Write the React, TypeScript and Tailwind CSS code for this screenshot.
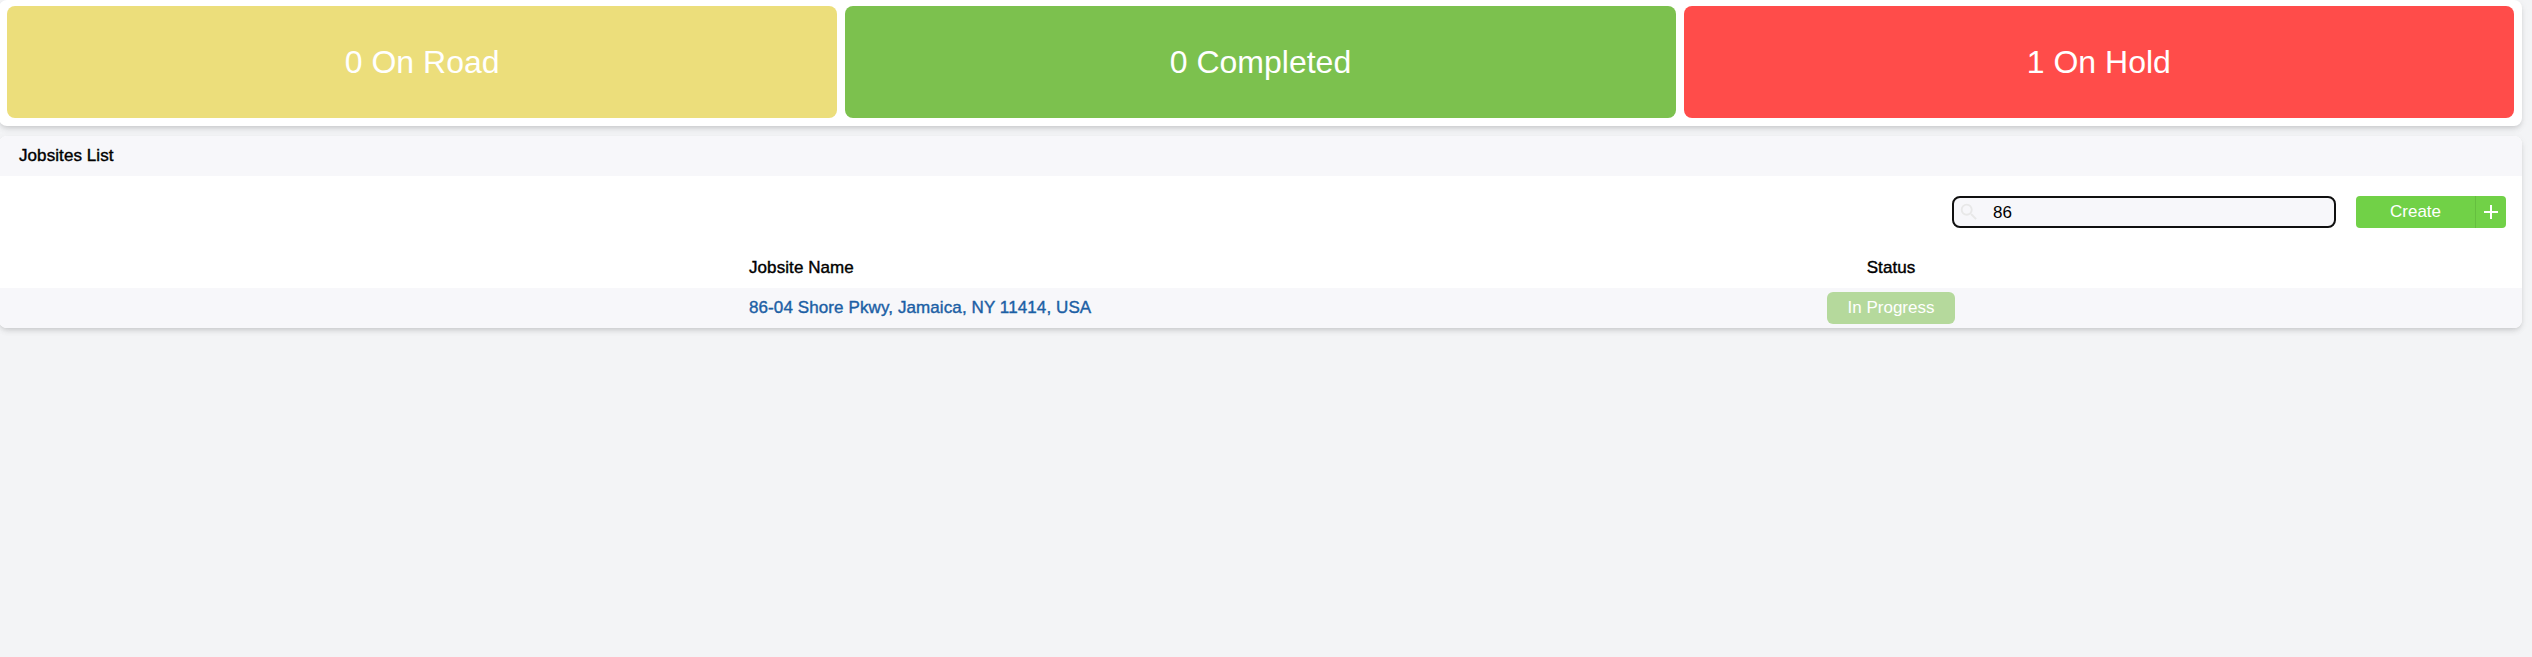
const cards = [
  { label: "0 On Road", color: "bg-[#ecde7b]" },
  { label: "0 Completed", color: "bg-[#7cc14e]" },
  { label: "1 On Hold", color: "bg-[#ff4c4a]" },
];

export default function App() {
  return (
    <div className="h-[657px] w-full overflow-hidden bg-[#f3f4f6] pr-[10px] font-['Liberation_Sans',Arial,sans-serif] text-[17px] text-black">
      <section className="-ml-px grid h-[126px] grid-cols-3 gap-2 rounded-lg bg-white px-2 pt-1.5 pb-2 shadow-[0_4px_6px_-1px_rgba(0,0,0,0.08),0_2px_4px_-1px_rgba(0,0,0,0.08),0_2px_8px_rgba(0,0,0,0.05)]">
        {cards.map((c) => (
          <div key={c.label} className={`flex items-center justify-center rounded-lg text-[32px] text-white ${c.color}`}>
            {c.label}
          </div>
        ))}
      </section>

      <section className="-ml-px mt-2.5 overflow-hidden rounded-lg bg-white shadow-[0_4px_6px_-1px_rgba(0,0,0,0.08),0_2px_4px_-1px_rgba(0,0,0,0.08),0_2px_8px_rgba(0,0,0,0.05)]">
        <header className="flex h-10 items-center bg-[#f7f7fa] pl-5 tracking-[0.08px] [-webkit-text-stroke:0.4px_black]">Jobsites List</header>
        <div className="flex h-[72px] items-start justify-end gap-5 pt-5 pr-4">
          <div className="flex h-8 w-96 items-center rounded-lg border-2 border-[#101010] bg-[#f7f7fa] pl-1">
            <svg viewBox="0 0 24 24" className="size-[22px] text-[#e8e8e8]" fill="currentColor">
              <path d="M15.5 14h-.79l-.28-.27A6.47 6.47 0 0 0 16 9.5 6.5 6.5 0 1 0 9.5 16c1.61 0 3.09-.59 4.23-1.57l.27.28v.79l5 4.99L20.49 19l-4.99-5zm-6 0C7.01 14 5 11.99 5 9.5S7.01 5 9.5 5 14 7.01 14 9.5 11.99 14 9.5 14z" />
            </svg>
            <input aria-label="Search jobsites" defaultValue="86" className="ml-[13px] w-64 bg-transparent pt-px outline-none" />
          </div>
          <button className="flex h-8 w-[150px] overflow-hidden rounded bg-[#71d147] text-white">
            <span className="flex h-full flex-1 items-center justify-center pb-px">Create</span>
            <span className="flex h-full w-[31px] items-center justify-center border-l border-[#65bf3f]">
              <svg viewBox="0 0 14 14" className="size-3.5" stroke="currentColor" strokeWidth="2">
                <path d="M7 0v14M0 7h14" />
              </svg>
            </span>
          </button>
        </div>
        <div className="flex h-10 items-center pl-[750px] tracking-[0.08px] [-webkit-text-stroke:0.4px_black]">
          <div className="w-[1078px]">Jobsite Name</div>
          <div className="w-32 text-center">Status</div>
        </div>
        <div className="flex h-10 items-center bg-[#f7f7fa] pl-[750px]">
          <a className="w-[1078px] tracking-[0.1px] text-[#1c5fa5] [-webkit-text-stroke:0.4px_#1c5fa5]">86-04 Shore Pkwy, Jamaica, NY 11414, USA</a>
          <div className="flex h-8 w-32 items-center justify-center rounded-md bg-[#b5d99c] pb-px text-white">In Progress</div>
        </div>
      </section>
    </div>
  );
}
